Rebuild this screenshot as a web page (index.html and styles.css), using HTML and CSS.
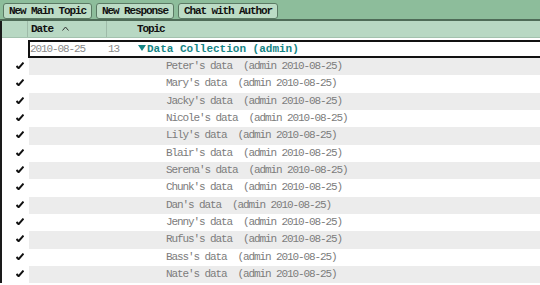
FILE: index.html
```html
<!DOCTYPE html>
<html lang="en">
<head>
    <meta charset="UTF-8">
    <title>Discussion</title>
    <link rel="stylesheet" href="styles.css">
</head>
<body>
    <div class="toolbar">
        <button class="btn">New Main Topic</button>
        <button class="btn">New Response</button>
        <button class="btn">Chat with Author</button>
    </div>
    <div class="view">
        <div class="head">
            <div class="col-mark"></div>
            <div class="col-date">Date <svg class="caret" width="7" height="5" viewBox="0 0 7 5"><polyline points="0.5,4.5 3.5,1 6.5,4.5" fill="none" stroke="#333" stroke-width="1"/></svg></div>
            <div class="col-topic">Topic</div>
        </div>
        <div class="category">
            <span class="cat-date">2010-08-25</span>
            <span class="cat-count">13</span>
            <span class="cat-title"><svg class="twisty" width="8" height="7" viewBox="0 0 8 7"><polygon points="0,0 8,0 4,6" fill="#148585"/></svg>Data Collection (admin)</span>
        </div>
        <ul class="rows">
            <li><span class="check"></span><span class="topic">Peter's data  (admin 2010-08-25)</span></li>
            <li><span class="check"></span><span class="topic">Mary's data  (admin 2010-08-25)</span></li>
            <li><span class="check"></span><span class="topic">Jacky's data  (admin 2010-08-25)</span></li>
            <li><span class="check"></span><span class="topic">Nicole's data  (admin 2010-08-25)</span></li>
            <li><span class="check"></span><span class="topic">Lily's data  (admin 2010-08-25)</span></li>
            <li><span class="check"></span><span class="topic">Blair's data  (admin 2010-08-25)</span></li>
            <li><span class="check"></span><span class="topic">Serena's data  (admin 2010-08-25)</span></li>
            <li><span class="check"></span><span class="topic">Chunk's data  (admin 2010-08-25)</span></li>
            <li><span class="check"></span><span class="topic">Dan's data  (admin 2010-08-25)</span></li>
            <li><span class="check"></span><span class="topic">Jenny's data  (admin 2010-08-25)</span></li>
            <li><span class="check"></span><span class="topic">Rufus's data  (admin 2010-08-25)</span></li>
            <li><span class="check"></span><span class="topic">Bass's data  (admin 2010-08-25)</span></li>
            <li><span class="check"></span><span class="topic">Nate's data  (admin 2010-08-25)</span></li>
        </ul>
    </div>
</body>
</html>
```

FILE: styles.css
```css
body {
    margin: 0;
    background-color: #fff;
    font-family: "Liberation Mono", monospace;
    font-size: 11px;
    letter-spacing: -1.1px;
    overflow: hidden;
}
.toolbar {
    display: flex;
    gap: 4px;
    height: 21px;
    padding: 3px 0 0 3px;
    box-sizing: border-box;
    background-color: #8dbd9b;
    border-bottom: 2px solid #4f6c58;
}
.btn {
    height: 16px;
    padding: 0 5px;
    background-color: #bcdcc5;
    border: 1px solid #5b7a64;
    border-radius: 3px;
    font-family: inherit;
    font-size: 11px;
    letter-spacing: -1.1px;
    font-weight: bold;
    color: #111;
    line-height: 14px;
}
.view {
    border-left: 2px solid #1a1a1a;
}
.head {
    display: flex;
    height: 16px;
    background-color: #b8d8c3;
    border-bottom: 1px solid #a3c2ae;
    line-height: 16px;
    color: #111;
    font-weight: bold;
}
.col-mark {
    width: 25px;
    border-right: 1px solid #9fbba9;
}
.col-date {
    width: 75px;
    padding-left: 3px;
    border-right: 1px solid #9fbba9;
}
.caret {
    margin-left: 3px;
    vertical-align: 1px;
}
.col-topic {
    padding-left: 30px;
}
.category {
    display: flex;
    height: 18px;
    margin: 2px 0 0 26px;
    box-sizing: border-box;
    border: 2px solid #111;
    border-right: none;
    line-height: 14px;
    color: #8a8a8a;
}
.cat-date {
    width: 78px;
}
.cat-count {
    width: 30px;
}
.cat-title {
    color: #148585;
    font-weight: bold;
    letter-spacing: 0;
}
.twisty {
    margin-right: 1px;
    vertical-align: 0;
}
.rows {
    list-style: none;
    margin: 0;
    padding: 0;
}
.rows li {
    display: flex;
    height: 17.33px;
    line-height: 17px;
    color: #7c7c7c;
}
.rows li:nth-child(odd) .topic {
    background-color: #ececec;
}
.check {
    width: 27px;
    background: url("data:image/svg+xml;utf8,<svg xmlns='http://www.w3.org/2000/svg' width='8' height='7' viewBox='0 0 8 7'><path d='M0.5 4 L2.6 6.2 L7.5 0.6' fill='none' stroke='%23111' stroke-width='2'/></svg>") no-repeat 14px 4px;
}
.topic {
    flex: 1;
    padding-left: 137px;
    white-space: pre;
}
```
